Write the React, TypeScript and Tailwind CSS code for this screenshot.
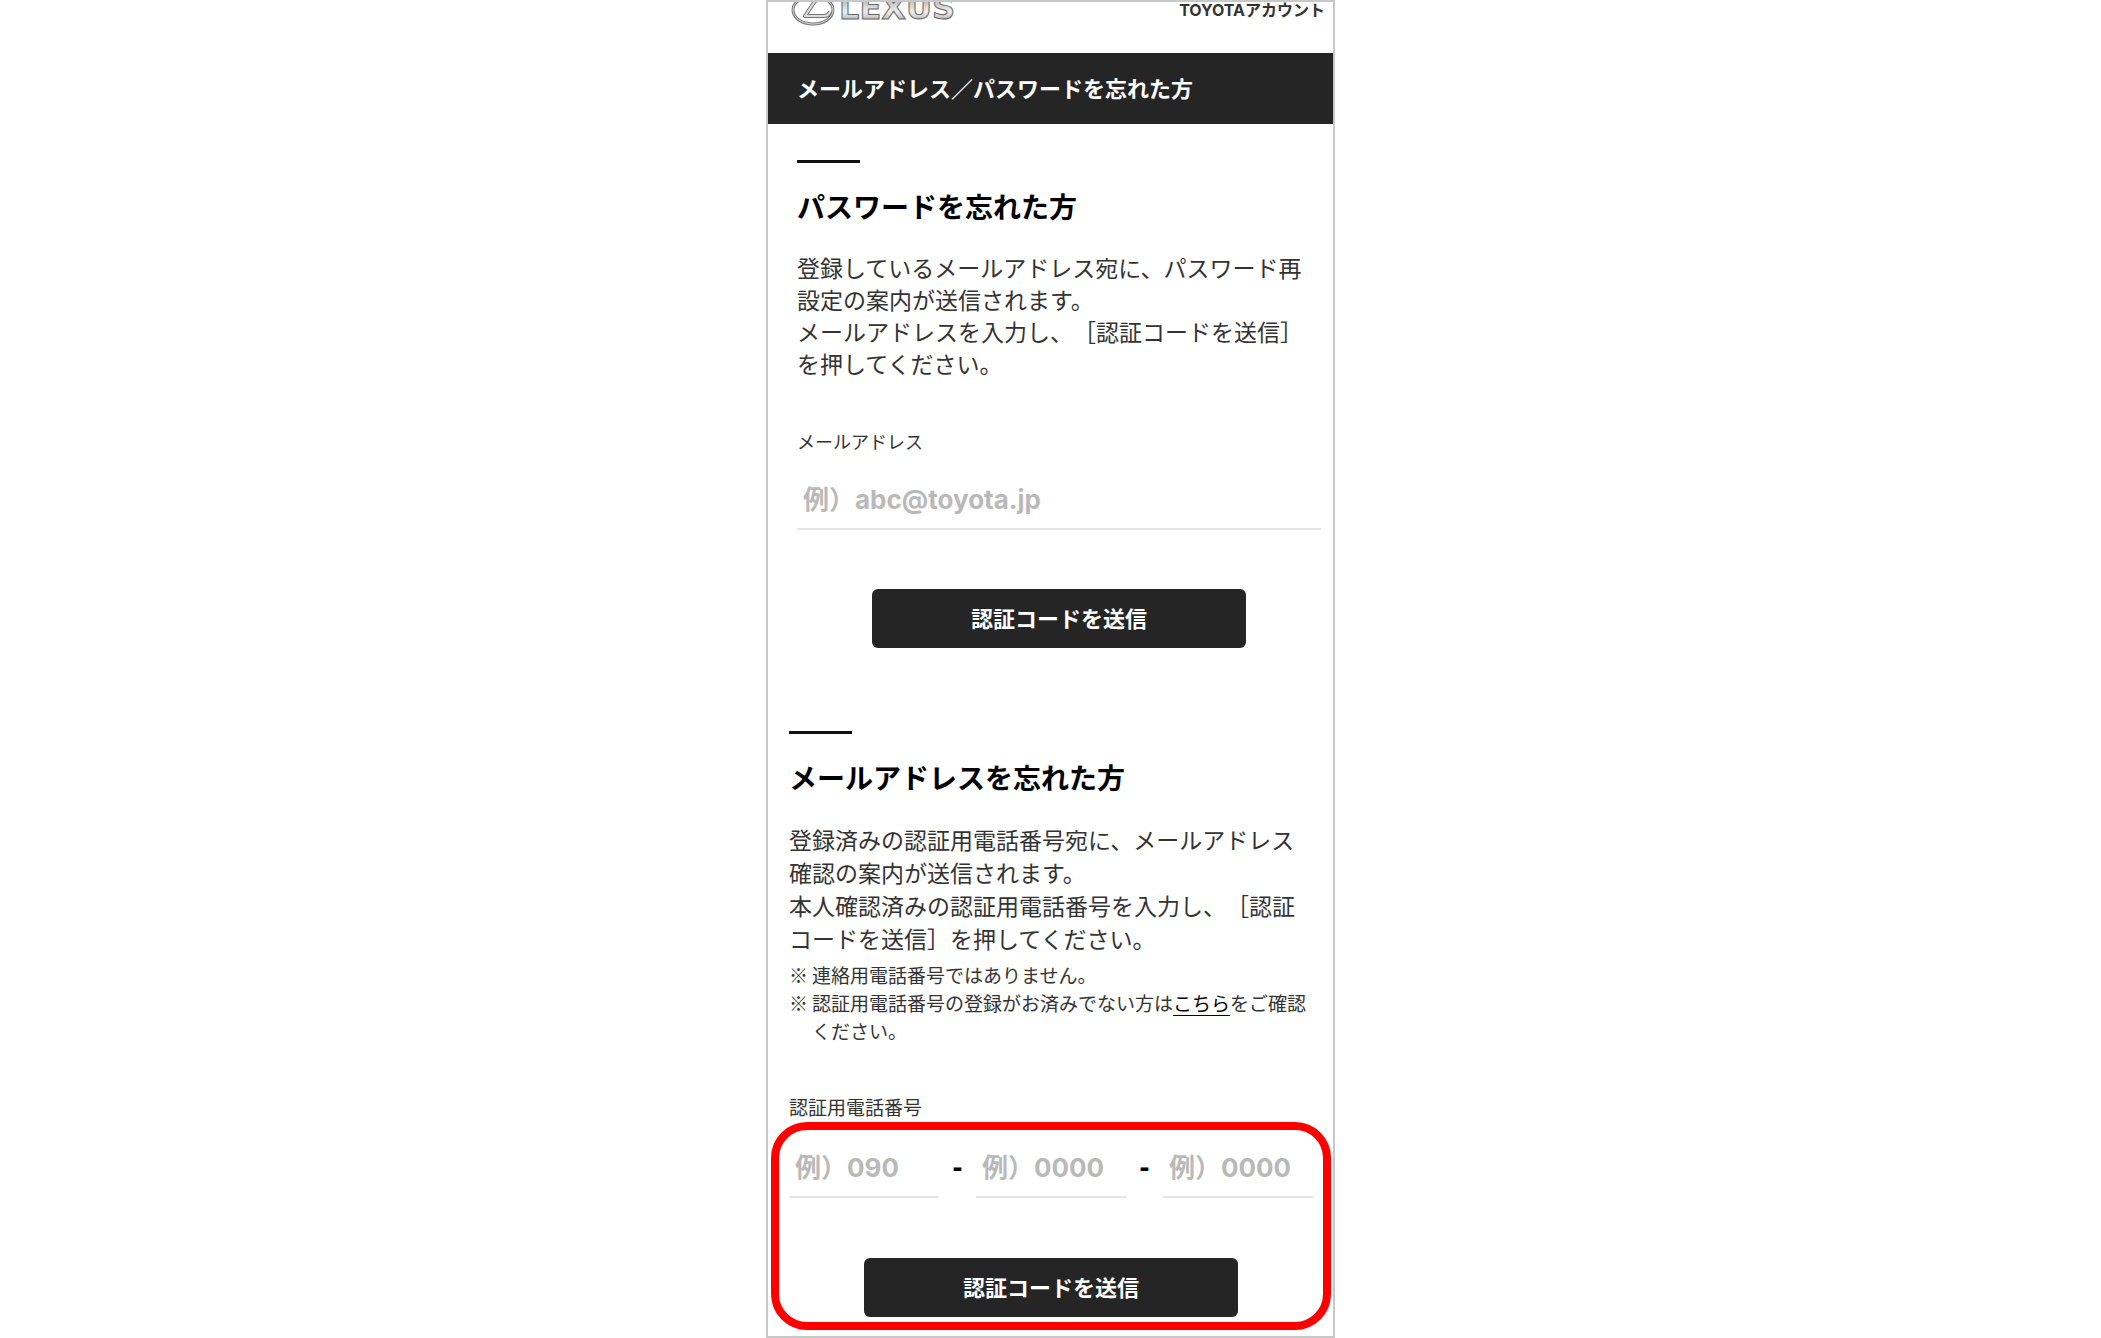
import type { ReactNode } from "react";

const SectionHeading = ({ children }: { children: ReactNode }) => (
  <>
    <div className="w-[63px] h-[3px] bg-[#111]" />
    <h2 className="mt-[22px] text-[28px] leading-[42px] font-bold text-black">
      {children}
    </h2>
  </>
);

const SubmitButton = () => (
  <button
    type="submit"
    className="mx-auto block h-[59px] w-[374px] max-w-full rounded-md bg-[#252525] pb-0.5 text-[22px] font-bold text-white"
  >
    認証コードを送信
  </button>
);

const inputClass =
  "block w-full min-w-0 h-[60px] border-b-2 border-[#e6e6e6] bg-transparent px-1.5 text-[26px] font-bold outline-none placeholder:text-[#b9b9b9] placeholder:opacity-100 font-['Inter','Noto_Sans_CJK_JP',sans-serif]";

const Logo = () => (
  <svg width="176" height="28" viewBox="0 0 176 28" role="img" aria-label="LEXUS">
    <defs>
      <linearGradient id="chrome" x1="0" y1="0" x2="0" y2="1">
        <stop offset="0" stopColor="#888" />
        <stop offset="0.6" stopColor="#eee" />
        <stop offset="1" stopColor="#888" />
      </linearGradient>
    </defs>
    <ellipse cx="22" cy="8" rx="20" ry="14" fill="none" stroke="#777" strokeWidth="3" />
    <ellipse cx="22" cy="8" rx="20" ry="14" fill="none" stroke="#ddd" strokeWidth="1" />
    <path
      d="M30 -5 Q25 -3 22 2 L14 14 H33 Q37 14 39 10"
      fill="none"
      stroke="#777"
      strokeWidth="4"
      strokeLinejoin="round"
    />
    <path
      d="M30 -5 Q25 -3 22 2 L14 14 H33 Q37 14 39 10"
      fill="none"
      stroke="#ddd"
      strokeWidth="2"
      strokeLinejoin="round"
    />
    <text
      x="48"
      y="17"
      fill="url(#chrome)"
      stroke="#666"
      strokeWidth="1"
      className="font-['DejaVu_Sans'] text-[32px] font-bold"
    >
      LEXUS
    </text>
  </svg>
);

const phoneParts = [
  { name: "area", placeholder: "例）090" },
  { name: "local", placeholder: "例）0000" },
  { name: "subscriber", placeholder: "例）0000" },
];

const App = () => (
  <div className="bg-white font-['Noto_Sans_CJK_JP',sans-serif] text-[#333]" lang="ja">
    <main className="mx-auto w-full max-w-[569px] overflow-hidden border-2 border-[#c8c8c8] bg-white [text-spacing-trim:space-all]">
      <header className="flex h-[51px] items-start justify-between pl-[23px] pr-2">
        <Logo />
        <p className="text-base leading-4 font-bold font-['Inter','Noto_Sans_CJK_JP',sans-serif]">
          TOYOTAアカウント
        </p>
      </header>
      <h1 className="bg-[#252525] pb-[3px] pl-[29px] text-[22px] leading-[68px] font-bold text-white">
        メールアドレス／パスワードを忘れた方
      </h1>

      <form className="pt-9 pl-[29px] pr-3" onSubmit={(e) => e.preventDefault()}>
        <SectionHeading>パスワードを忘れた方</SectionHeading>
        <p className="mt-6 text-[23px] leading-8">
          登録しているメールアドレス宛に、パスワード再設定の案内が送信されます。
          <br />
          メールアドレスを入力し、［認証コードを送信］を押してください。
        </p>
        <label htmlFor="email" className="mt-12 block text-lg leading-7">
          メールアドレス
        </label>
        <input id="email" type="email" placeholder="例）abc@toyota.jp" className={`mt-[15px] ${inputClass}`} />
        <div className="pt-[59px]">
          <SubmitButton />
        </div>
      </form>

      <form className="mt-[83px] pl-[21px] pr-5" onSubmit={(e) => e.preventDefault()}>
        <SectionHeading>メールアドレスを忘れた方</SectionHeading>
        <p className="mt-[25px] text-[23px] leading-[33px]">
          登録済みの認証用電話番号宛に、メールアドレス確認の案内が送信されます。
          <br />
          本人確認済みの認証用電話番号を入力し、［認証コードを送信］を押してください。
        </p>
        <ul className="mt-1.5 text-[19px] leading-7">
          <li className="flex gap-1">
            <span>※</span>
            <span>連絡用電話番号ではありません。</span>
          </li>
          <li className="flex gap-1">
            <span>※</span>
            <span>
              認証用電話番号の登録がお済みでない方は
              <a href="#register" className="text-black underline underline-offset-4">
                こちら
              </a>
              をご確認ください。
            </span>
          </li>
        </ul>
        <fieldset className="mt-12">
          <legend className="text-[19px] leading-7">認証用電話番号</legend>
          <div className="relative mt-[5px]">
            {/* highlight frame around the phone number entry */}
            <div className="pointer-events-none absolute -top-1 -right-[18px] -left-[18px] h-52 rounded-[36px] border-8 border-[#ff0000]" />
            <div className="flex items-center pt-3">
              {phoneParts.map(({ name, placeholder }, i) => (
                <div key={name} className="contents">
                  {i > 0 && (
                    <span className="w-[37px] shrink-0 text-center text-[25px] font-bold text-black font-['DejaVu_Sans']">
                      -
                    </span>
                  )}
                  <input
                    type="tel"
                    name={name}
                    aria-label={`認証用電話番号 ${i + 1}`}
                    placeholder={placeholder}
                    className={inputClass}
                  />
                </div>
              ))}
            </div>
            <div className="pt-[60px] pb-[19px]">
              <SubmitButton />
            </div>
          </div>
        </fieldset>
      </form>
    </main>
  </div>
);

export default App;
